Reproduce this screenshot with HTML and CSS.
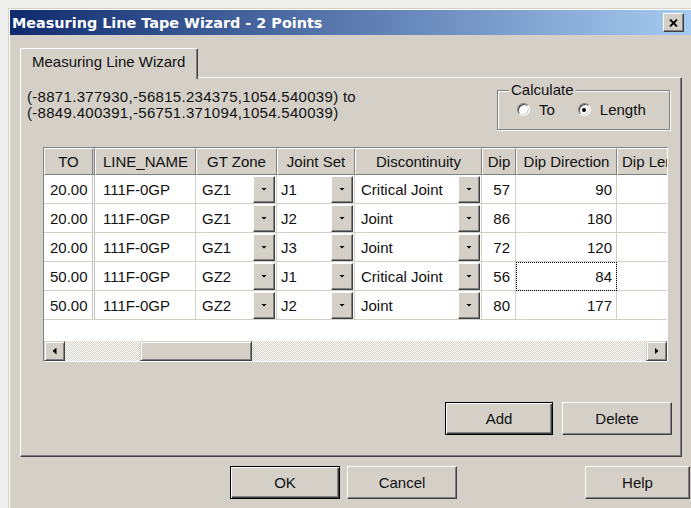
FILE: index.html
```html
<!DOCTYPE html>
<html lang="en">
<head>
<meta charset="utf-8">
<title>Measuring Line Tape Wizard</title>
<link rel="stylesheet" href="styles.css">
</head>
<body>
<div class="window">
  <div class="titlebar">
    <span class="title">Measuring Line Tape Wizard - 2 Points</span>
    <span class="close-btn"><svg class="close-x" width="9" height="8" viewBox="0 0 9 8"><path d="M1 0.5 L8 7.5 M8 0.5 L1 7.5" stroke="#000" stroke-width="1.8" fill="none"/></svg></span>
  </div>
  <div class="client">
    <div class="tabs"><div class="tab">Measuring Line Wizard</div></div>
    <div class="page">
      <div class="page-top">
        <div class="coords">(-8871.377930,-56815.234375,1054.540039) to<br>(-8849.400391,-56751.371094,1054.540039)</div>
        <div class="group">
          <span class="group-label">Calculate</span>
          <div class="radios">
            <span class="radio"><span class="radio-dot"></span>To</span>
            <span class="radio checked"><span class="radio-dot"></span>Length</span>
          </div>
        </div>
      </div>

      <div class="grid">
        <div class="grid-body">
          <div class="grid-row head">
            <div class="hc to">TO</div>
            <div class="hc">LINE_NAME</div>
            <div class="hc">GT Zone</div>
            <div class="hc">Joint Set</div>
            <div class="hc">Discontinuity</div>
            <div class="hc">Dip</div>
            <div class="hc">Dip Direction</div>
            <div class="hc last">Dip Length</div>
          </div>

          <div class="grid-row">
            <div class="cell to">20.00</div>
            <div class="cell name">111F-0GP</div>
            <div class="cell combo"><span class="val">GZ1</span><span class="drop"><i></i></span></div>
            <div class="cell combo joint"><span class="val">J1</span><span class="drop"><i></i></span></div>
            <div class="cell combo"><span class="val">Critical Joint</span><span class="drop"><i></i></span></div>
            <div class="cell num">57</div>
            <div class="cell num dir">90</div>
            <div class="cell"></div>
          </div>

          <div class="grid-row">
            <div class="cell to">20.00</div>
            <div class="cell name">111F-0GP</div>
            <div class="cell combo"><span class="val">GZ1</span><span class="drop"><i></i></span></div>
            <div class="cell combo joint"><span class="val">J2</span><span class="drop"><i></i></span></div>
            <div class="cell combo"><span class="val">Joint</span><span class="drop"><i></i></span></div>
            <div class="cell num">86</div>
            <div class="cell num dir">180</div>
            <div class="cell"></div>
          </div>

          <div class="grid-row">
            <div class="cell to">20.00</div>
            <div class="cell name">111F-0GP</div>
            <div class="cell combo"><span class="val">GZ1</span><span class="drop"><i></i></span></div>
            <div class="cell combo joint"><span class="val">J3</span><span class="drop"><i></i></span></div>
            <div class="cell combo"><span class="val">Joint</span><span class="drop"><i></i></span></div>
            <div class="cell num">72</div>
            <div class="cell num dir">120</div>
            <div class="cell"></div>
          </div>

          <div class="grid-row">
            <div class="cell to">50.00</div>
            <div class="cell name">111F-0GP</div>
            <div class="cell combo"><span class="val">GZ2</span><span class="drop"><i></i></span></div>
            <div class="cell combo joint"><span class="val">J1</span><span class="drop"><i></i></span></div>
            <div class="cell combo"><span class="val">Critical Joint</span><span class="drop"><i></i></span></div>
            <div class="cell num">56</div>
            <div class="cell num dir focused">84</div>
            <div class="cell"></div>
          </div>

          <div class="grid-row">
            <div class="cell to">50.00</div>
            <div class="cell name">111F-0GP</div>
            <div class="cell combo"><span class="val">GZ2</span><span class="drop"><i></i></span></div>
            <div class="cell combo joint"><span class="val">J2</span><span class="drop"><i></i></span></div>
            <div class="cell combo"><span class="val">Joint</span><span class="drop"><i></i></span></div>
            <div class="cell num">80</div>
            <div class="cell num dir">177</div>
            <div class="cell"></div>
          </div>
        </div>

        <div class="hscroll">
          <span class="sb-btn"><i class="arrow-left"></i></span>
          <span class="sb-thumb"></span>
          <span class="sb-btn right"><i class="arrow-right"></i></span>
        </div>
      </div>

      <div class="page-actions">
        <button type="button" class="btn default add">Add</button>
        <button type="button" class="btn">Delete</button>
      </div>
    </div>

    <div class="dialog-actions">
      <button type="button" class="btn default">OK</button>
      <button type="button" class="btn">Cancel</button>
      <button type="button" class="btn help">Help</button>
    </div>
  </div>
</div>
</body>
</html>
```

FILE: styles.css
```css
html, body {
  margin: 0;
  overflow: hidden;
}

body {
  height: 508px;
  background: #eeeeec;
  font-family: "Liberation Sans", Arial, sans-serif;
  font-size: 15px;
  color: #111;
}

/* dialog frame; it runs past the right edge of the screen */
.window {
  margin: 8px 0 0 8px;
  width: 683px;
  height: 500px;
  box-sizing: border-box;
  overflow: hidden;
  background: #d4d0c8;
  border-top: 1px solid #d4d0c8;
  border-left: 1px solid #d4d0c8;
  padding: 1px 0 0 1px;
  box-shadow: inset 1px 1px #fff;
}

.titlebar {
  height: 25px;
  display: grid;
  grid-template-columns: 1fr 21px;
  align-items: center;
  padding: 0 7px 0 2px;
  background: linear-gradient(to right, #0f2b6f, #a6caf0);
}

.title {
  white-space: nowrap;
  font-family: "DejaVu Sans", sans-serif;
  font-weight: bold;
  font-size: 14.4px;
  color: #fff;
}

.close-btn {
  width: 21px;
  height: 19px;
  box-sizing: border-box;
  display: flex;
  align-items: center;
  justify-content: center;
  background: #d4d0c8;
  border: 1px solid;
  border-color: #fff #404040 #404040 #fff;
  box-shadow: inset -1px -1px #808080;
}

.close-x {
  display: block;
}

.client {
  padding: 13px 0 0 10px;
}

/* tab strip */
.tabs {
  display: flex;
}

.tab {
  position: relative;
  z-index: 1;
  height: 31px;
  margin-bottom: -2px;
  box-sizing: border-box;
  padding: 0 12px 0 11px;
  line-height: 26px;
  background: #d4d0c8;
  border-top: 1px solid #fff;
  border-left: 1px solid #fff;
  border-right: 1px solid #404040;
  border-radius: 2px 2px 0 0;
  box-shadow: inset -1px 0 #808080;
}

.page {
  width: 662px;
  height: 380px;
  box-sizing: border-box;
  display: flex;
  flex-direction: column;
  border: 1px solid;
  border-color: #fff #404040 #404040 #fff;
  box-shadow: inset -1px -1px #808080;
}

.page-top {
  display: flex;
  align-items: flex-start;
}

.coords {
  margin: 11px 0 0 6px;
  line-height: 16px;
  white-space: nowrap;
  letter-spacing: 0.3px;
}

/* etched group box */
.group {
  margin: 12px 11px 0 auto;
  width: 173px;
  height: 40px;
  box-sizing: border-box;
  border: 1px solid #808080;
  box-shadow: 1px 1px 0 #fff, inset 1px 1px 0 #fff;
}

.group-label {
  display: block;
  width: fit-content;
  margin: -9px 0 0 11px;
  padding: 0 2px;
  line-height: 16px;
  background: #d4d0c8;
}

.radios {
  height: 23px;
  display: flex;
  align-items: center;
  padding-left: 19px;
}

.radio {
  display: flex;
  align-items: center;
  gap: 9px;
}

.radio + .radio {
  margin-left: 23px;
}

.radio-dot {
  width: 13px;
  height: 13px;
  box-sizing: border-box;
  display: grid;
  place-items: center;
  border-radius: 50%;
  background: #fff;
  border: 1px solid;
  border-color: #808080 #fff #fff #808080;
  box-shadow: inset 1px 1px #404040, inset -1px -1px #d4d0c8;
}

.checked .radio-dot::after {
  content: "";
  width: 4px;
  height: 4px;
  border-radius: 50%;
  background: #000;
}

/* data grid */
.grid {
  margin: 17px 0 0 22px;
  width: 625px;
  height: 215px;
  box-sizing: border-box;
  display: flex;
  flex-direction: column;
  background: #fff;
  border: 1px solid;
  border-color: #808080 #fff #fff #808080;
}

.grid-body {
  flex: 1;
  overflow: hidden;
}

.grid-row {
  display: grid;
  grid-template-columns: 51px 101px 81px 78px 127px 34px 101px 80px;
  width: 653px;
  height: 29px;
}

.grid-row.head {
  height: 27px;
}

.hc {
  box-sizing: border-box;
  display: flex;
  align-items: center;
  justify-content: center;
  overflow: hidden;
  white-space: nowrap;
  background: #d4d0c8;
  border: 1px solid;
  border-color: #fff #808080 #808080 #fff;
}

.hc.last {
  justify-content: flex-start;
  padding-left: 4px;
}

.hc.to {
  border-right: 3px double #808080;
}

.cell {
  box-sizing: border-box;
  display: flex;
  align-items: center;
  padding: 0 6px;
  white-space: nowrap;
  overflow: hidden;
  border-right: 1px solid #d4d0c8;
  border-bottom: 1px solid #d4d0c8;
}

.cell.to {
  border-right: 3px double #c4c4c4;
}

.cell.name {
  padding-left: 8px;
}

.cell.num {
  justify-content: flex-end;
  padding-right: 5px;
}

.cell.dir {
  padding-right: 4px;
}

.cell.focused {
  outline: 1px dotted #000;
  outline-offset: -1px;
}

.cell.combo {
  padding: 0 1px 0 6px;
}

.cell.combo.joint {
  padding-left: 4px;
}

.combo .val {
  flex: 1;
}

.drop {
  width: 22px;
  height: 27px;
  box-sizing: border-box;
  display: grid;
  place-items: center;
  background: #d4d0c8;
  border: 1px solid;
  border-color: #fff #404040 #404040 #fff;
  box-shadow: inset -1px -1px #808080;
}

.drop i {
  width: 6px;
  height: 3px;
  background: #000;
  clip-path: polygon(0 0, 100% 0, 50% 100%);
}

/* horizontal scroll bar */
.hscroll {
  flex-shrink: 0;
  height: 20px;
  display: flex;
  background: repeating-conic-gradient(#fff 0 25%, #d4d0c8 0 50%) 0 0 / 2px 2px;
}

.sb-btn,
.sb-thumb {
  box-sizing: border-box;
  background: #d4d0c8;
  border: 1px solid;
  border-color: #d4d0c8 #404040 #404040 #d4d0c8;
  box-shadow: inset 1px 1px #fff, inset -1px -1px #808080;
}

.sb-btn {
  width: 21px;
  display: grid;
  place-items: center;
}

.sb-btn.right {
  margin-left: auto;
}

.sb-thumb {
  width: 112px;
  margin-left: 75px;
}

.arrow-left,
.arrow-right {
  width: 4px;
  height: 7px;
  background: #000;
}

.arrow-left {
  clip-path: polygon(100% 0, 100% 100%, 0 50%);
}

.arrow-right {
  clip-path: polygon(0 0, 0 100%, 100% 50%);
}

/* push buttons */
.btn {
  flex: none;
  width: 110px;
  height: 33px;
  box-sizing: border-box;
  margin: 0;
  padding: 0;
  font: inherit;
  color: #111;
  background: #d4d0c8;
  border: 1px solid;
  border-color: #fff #404040 #404040 #fff;
  border-radius: 0;
  box-shadow: inset -1px -1px #808080;
}

.btn.default {
  border-color: #000;
  box-shadow: inset 1px 1px #fff, inset -1px -1px #404040, inset -2px -2px #808080;
}

.btn.add {
  width: 108px;
}

.page-actions {
  display: flex;
  justify-content: flex-end;
  gap: 9px;
  margin: 40px 9px 0 0;
}

.dialog-actions {
  display: flex;
  gap: 7px;
  margin-top: 9px;
  padding-left: 210px;
}

.btn.help {
  width: 105px;
  margin-left: 121px;
}
```
